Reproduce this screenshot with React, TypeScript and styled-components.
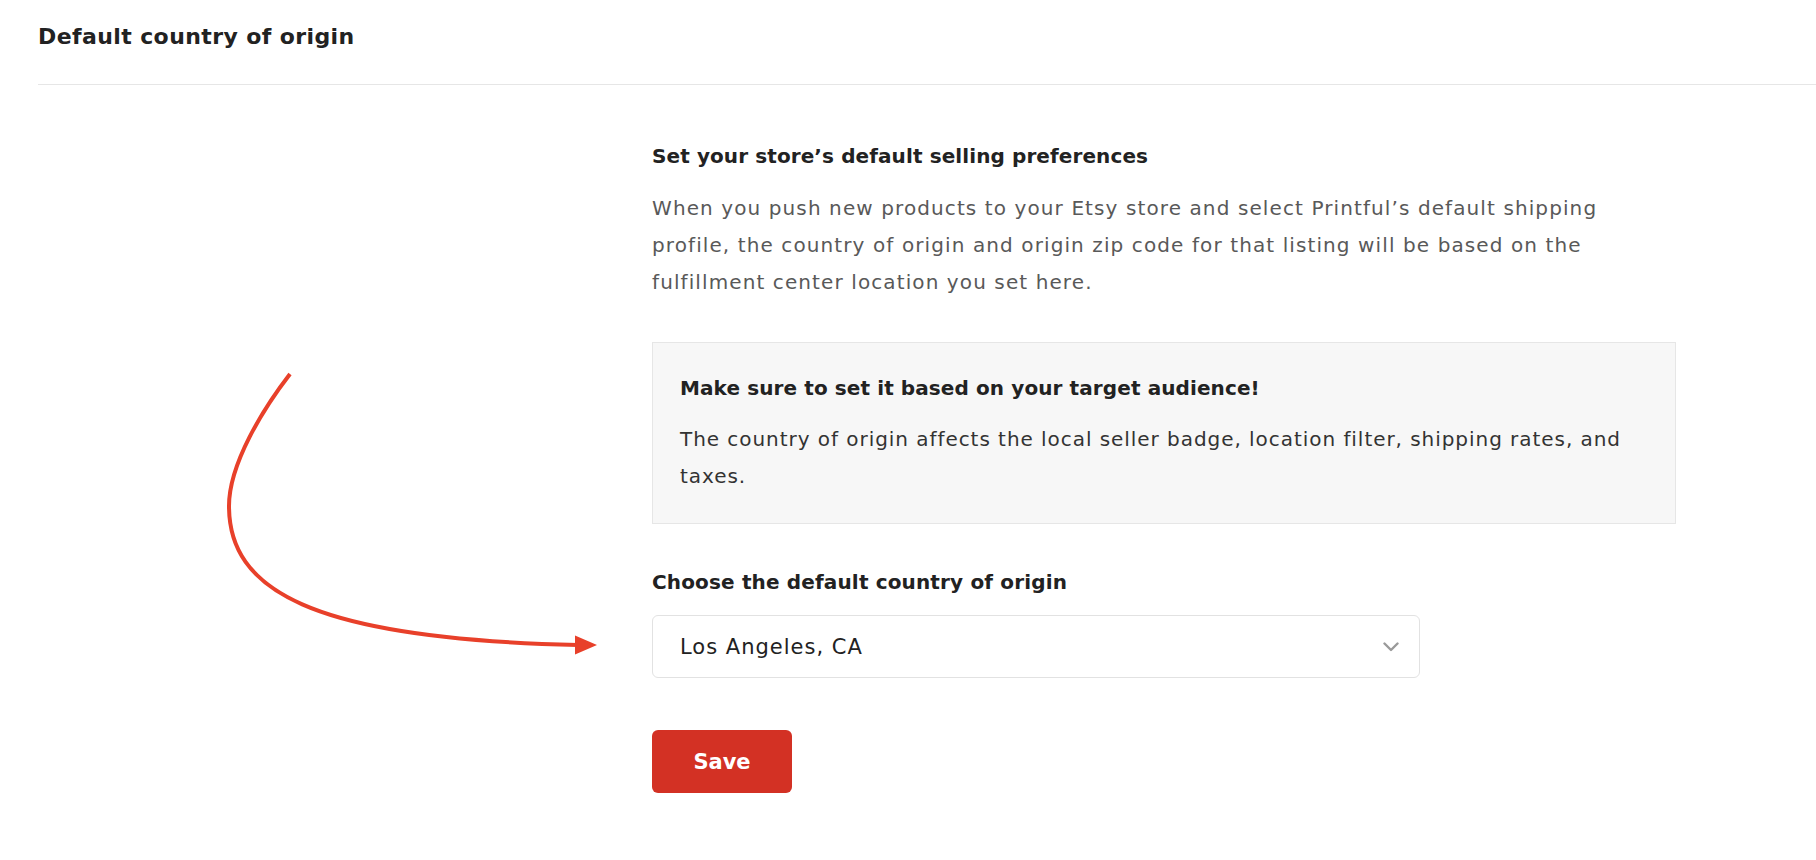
import styled, { createGlobalStyle } from 'styled-components';

const GlobalStyle = createGlobalStyle`
  html, body {
    margin: 0;
    padding: 0;
    background: #fff;
  }
  body {
    font-family: "DejaVu Sans", "Liberation Sans", sans-serif;
    color: #222;
  }
`;

const Page = styled.div`
  width: 1816px;
  min-height: 860px;
  padding-left: 38px;
  box-sizing: border-box;
`;

const Header = styled.header`
  padding: 21px 0 31px;
  border-bottom: 1px solid #e6e6e6;
`;

const PageTitle = styled.h1`
  margin: 0;
  font-size: 22px;
  line-height: 32px;
  font-weight: 700;
  letter-spacing: 0.4px;
  color: #222;
`;

const Body = styled.div`
  display: flex;
  padding-top: 57px;
`;

const Aside = styled.aside`
  width: 614px;
  flex-shrink: 0;
`;

const ArrowSvg = styled.svg`
  display: block;
  margin-top: 217px;
`;

const Main = styled.main`
  width: 1024px;
`;

const SectionTitle = styled.h2`
  margin: 0;
  font-size: 20px;
  line-height: 28px;
  font-weight: 700;
  letter-spacing: 0.1px;
  color: #222;
`;

const Text = styled.p<{ $muted?: boolean }>`
  margin: ${p => (p.$muted ? '20px 0 0' : '19px 0 0')};
  max-width: 990px;
  font-size: 20px;
  line-height: 37px;
  letter-spacing: ${p => (p.$muted ? '1.1px' : '0.95px')};
  color: ${p => (p.$muted ? '#595959' : '#333')};
`;

const Notice = styled.div`
  margin-top: 41px;
  padding: 31px 20px 28px 27px;
  background: #f7f7f7;
  border: 1px solid #e6e6e6;
`;

const Label = styled.label`
  display: block;
  margin-top: 44px;
  font-size: 20px;
  line-height: 28px;
  font-weight: 700;
  letter-spacing: 0.15px;
  color: #222;
`;

const Select = styled.div`
  margin-top: 19px;
  width: 768px;
  height: 63px;
  box-sizing: border-box;
  display: flex;
  align-items: center;
  justify-content: space-between;
  padding: 0 20px 0 27px;
  border: 1px solid #e2e2e2;
  border-radius: 6px;
  font-size: 21px;
  letter-spacing: 1px;
  color: #222;
`;

const SaveButton = styled.button`
  display: block;
  margin-top: 52px;
  width: 140px;
  height: 63px;
  border: none;
  border-radius: 6px;
  background: #d33124;
  color: #fff;
  font-family: inherit;
  font-size: 21px;
  font-weight: 700;
  cursor: pointer;
`;

const Chevron = () => (
  <svg width="16" height="10" viewBox="0 0 16 10" fill="none">
    <path d="M1.5 1.5 L8 8 L14.5 1.5" stroke="#9a9a9a" strokeWidth="2.4" strokeLinecap="round" strokeLinejoin="round" />
  </svg>
);

export default function App() {
  return (
    <Page>
      <GlobalStyle />
      <Header>
        <PageTitle>Default country of origin</PageTitle>
      </Header>
      <Body>
        <Aside>
          <ArrowSvg width="614" height="310" viewBox="0 0 614 310">
            <path
              d="M252 15 C 225 50 191 105 191 147 C 191 230 270 280 540 286"
              fill="none"
              stroke="#e8402a"
              strokeWidth="4"
            />
            <polygon points="537,276.5 559,286 537,295.5" fill="#e8402a" />
          </ArrowSvg>
        </Aside>
        <Main>
          <SectionTitle>Set your store’s default selling preferences</SectionTitle>
          <Text $muted>
            When you push new products to your Etsy store and select Printful’s default shipping
            profile, the country of origin and origin zip code for that listing will be based on the
            fulfillment center location you set here.
          </Text>
          <Notice>
            <SectionTitle>Make sure to set it based on your target audience!</SectionTitle>
            <Text>
              The country of origin affects the local seller badge, location filter, shipping rates, and
              taxes.
            </Text>
          </Notice>
          <Label>Choose the default country of origin</Label>
          <Select>
            <span>Los Angeles, CA</span>
            <Chevron />
          </Select>
          <SaveButton>Save</SaveButton>
        </Main>
      </Body>
    </Page>
  );
}
